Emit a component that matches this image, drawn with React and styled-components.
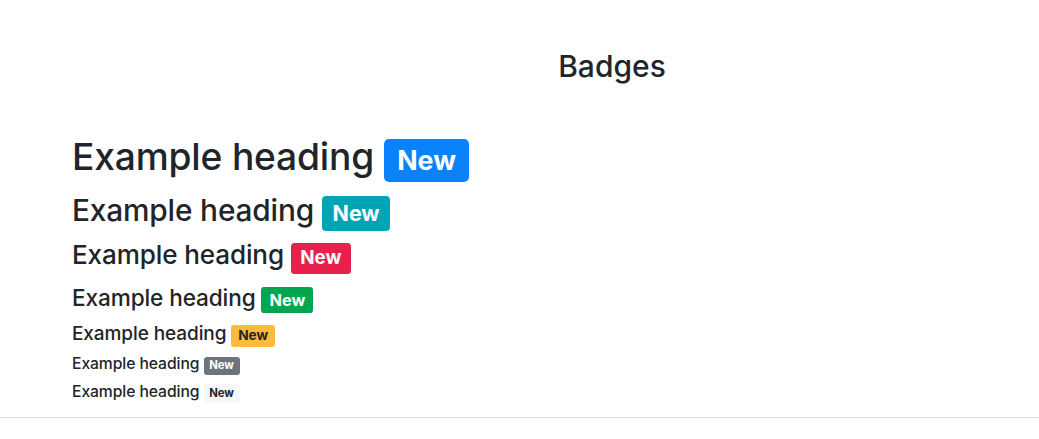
import React from "react";
import styled, { createGlobalStyle } from "styled-components";

const Global = createGlobalStyle`
  html, body { margin: 0; padding: 0; background: #fff; }
  body { font-family: Inter, "Helvetica Neue", Arial, sans-serif; color: #212529; }
`;

const Page = styled.div`
  display: flex;
  flex-direction: column;
  min-height: 439px;
`;

const Header = styled.header`
  padding: 48px 0 0 185px;
  text-align: center;
`;

const Title = styled.h2`
  margin: 0;
  font-size: 30px;
  font-weight: 500;
  line-height: 1.2;
`;

const List = styled.section`
  padding: 51px 72px 6px;
  border-bottom: 1px solid #e2e2e2;
`;

const Heading = styled.div`
  font-size: ${(p) => p.$size}px;
  font-weight: 500;
  line-height: 1.2;
  margin: 0 0 ${(p) => p.$gap}px;
  letter-spacing: -0.005em;
`;

const COLORS = {
  primary: ["#0a82fb", "#fff"],
  info: ["#00a5b5", "#fff"],
  danger: ["#e7214b", "#fff"],
  success: ["#02a651", "#fff"],
  warning: ["#fdbb3b", "#212529"],
  secondary: ["#6c757d", "#fff"],
  light: ["#f6f7f8", "#212529"],
};

const Badge = styled.span`
  display: inline-block;
  padding: 0.31em 0.5em;
  font-size: 0.72em;
  font-weight: 700;
  line-height: 1;
  border-radius: max(3px, 0.19em);
  vertical-align: baseline;
  letter-spacing: 0;
  background: ${(p) => COLORS[p.$variant][0]};
  color: ${(p) => COLORS[p.$variant][1]};
`;

const rows = [
  [37.2, "primary", 11],
  [29.8, "info", 8],
  [26.1, "danger", 10],
  [22.6, "success", 10],
  [19, "warning", 8],
  [15.7, "secondary", 8],
  [15.7, "light", 8],
];

export default function App() {
  return (
    <Page>
      <Global />
      <Header>
        <Title>Badges</Title>
      </Header>
      <List>
        {rows.map(([size, v, gap], i) => (
          <Heading key={i} $size={size} $gap={gap}>
            Example heading <Badge $variant={v}>New</Badge>
          </Heading>
        ))}
      </List>
    </Page>
  );
}
